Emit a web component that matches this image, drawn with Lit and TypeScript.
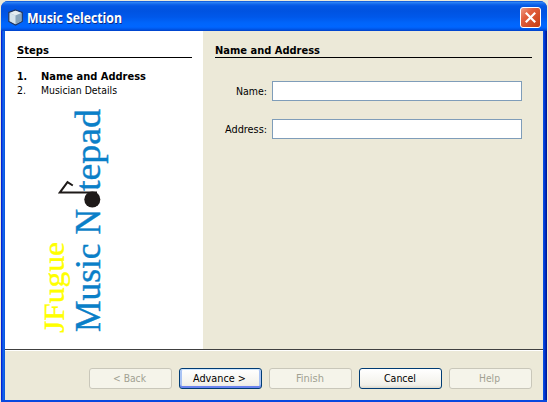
import { LitElement, html, svg, css } from "lit";
import { customElement, property } from "lit/decorators.js";

/* A single line of text fitted to a given width; its baseline is 11px down. */
@customElement("fitted-label")
class FittedLabel extends LitElement {
  @property() text = "";
  @property({ type: Number }) width = 50;

  static styles = css`
    :host { display: block; flex: none; height: 14px; }
    svg { display: block; overflow: visible; }
    text { fill: currentColor; white-space: pre; }
  `;

  render() {
    return html`<svg width=${this.width} height="14">
      <text x="0" y="11" textLength=${this.width} lengthAdjust="spacingAndGlyphs">${this.text}</text>
    </svg>`;
  }
}

@customElement("wizard-logo")
class WizardLogo extends LitElement {
  static styles = css`
    :host { display: block; }
    svg { display: block; }
    text { font-family: "Liberation Serif", serif; }
    .product { font-size: 30px; fill: #ffff00; stroke: #ffff00; stroke-width: 0.4; }
    .title { font-size: 35px; fill: #0a7fc8; stroke: #0a7fc8; stroke-width: 0.4; }
  `;

  render() {
    return html`<svg width="80" height="236" viewBox="35 103 80 236">
      ${svg`
        <text class="product" transform="translate(63.5 333) rotate(-90)" textLength="91" lengthAdjust="spacingAndGlyphs">JFugue</text>
        <text class="title" transform="translate(100 332) rotate(-90)" textLength="123" lengthAdjust="spacingAndGlyphs">Music N</text>
        <text class="title" transform="translate(100 191) rotate(-90)" textLength="82" lengthAdjust="spacingAndGlyphs">tepad</text>
        <circle cx="92.3" cy="199.5" r="8" fill="#1e1a19"/>
        <path d="M97 192.6H59.8L67.5 182.2L72.8 185.5" fill="none" stroke="#1e1a19" stroke-width="2"/>
      `}
    </svg>`;
  }
}

@customElement("app-root")
class AppRoot extends LitElement {
  static styles = css`
    :host {
      display: block; width: 548px; height: 402px; overflow: hidden; box-sizing: border-box;
      padding: 1px 1px 0 1px; background: #ece9d8; color: #000;
      font: 11px "DejaVu Sans Condensed", "DejaVu Sans", sans-serif;
    }
    .window {
      height: 401px; box-sizing: border-box; display: flex; flex-direction: column;
      border-radius: 7px 7px 0 0; overflow: hidden;
      background: linear-gradient(90deg, #0019cf 0, #0831d9 1px, #166aee 2px, #0855dd 4px, #0855dd calc(100% - 4px), #0543e0 calc(100% - 3px), #0030c8 calc(100% - 2px), #00138c 100%);
    }
    .titlebar {
      height: 30px; flex: none; display: flex; align-items: center; box-sizing: border-box;
      padding: 0 6px 0 7px; color: #fff;
      background: linear-gradient(180deg, #0a4fd4 0, #2b83f5 1.5px, #1568ec 3px, #0458e4 5px, #0053e1 10px, #0058ea 16px, #0065fb 22px, #0066ff 26px, #0058ea 28px, #0040c8 30px);
    }
    .titlebar svg { flex: none; }
    .caption {
      font: bold 14px "Open Sans", "Noto Sans", sans-serif; margin: 5px 0 0 3px;
      text-shadow: 1px 1px #0a2a86; flex: 1;
    }
    .caption svg { display: block; overflow: visible; }
    .app-icon { margin-top: 2px; }
    .close { display: block; margin-top: 3px; }
    .content { height: 369px; flex: none; margin: 0 4px; display: flex; flex-direction: column; background: #ece9d8; }
    .panels { height: 318px; flex: none; display: flex; border-bottom: 1px solid #404040; }
    .steps { width: 198px; box-sizing: border-box; padding: 12px 11px 0 12px; background: #fff; }
    .form { flex: 1; padding: 12px 11px 0 12px; }
    .heading { height: 14px; border-bottom: 1px solid #000; }
    .strong { font-weight: bold; }
    .list { padding-top: 11px; }
    .step { display: grid; grid-template-columns: 24px 1fr; height: 14px; }
    wizard-logo { margin: 6px 0 0 18px; }
    .row { display: flex; justify-content: flex-end; align-items: flex-start; gap: 5px; margin-right: 10px; height: 20px; }
    .row + .row { margin-top: 18px; }
    .row fitted-label { margin-top: 3px; }
    .first { margin-top: 23px; }
    .field { width: 250px; height: 20px; box-sizing: border-box; border: 1px solid #7f9db9; background: #fff; }
    .actions { display: flex; justify-content: flex-end; gap: 7px; padding: 17px 11px 0 0; border-top: 1px solid #fff; }
    .button {
      width: 83px; height: 21px; box-sizing: border-box; display: flex; justify-content: center;
      padding: 2px 2px 0 0; border: 1px solid #003c74; border-radius: 3px;
      background: linear-gradient(#fff, #f6f5f0 60%, #f0efe8 85%, #dcd8cc);
    }
    .primary { box-shadow: inset 0 1px #cee7ff, inset 0 -2px #6982ee, inset 2px 0 #a9c3f4, inset -2px 0 #a9c3f4; }
    .disabled { color: #a1a192; border-color: #c9c7ba; background: #f5f4ea; }
    .edge { height: 2px; background: #0848df; }
  `;

  private button(text: string, width: number, kind = "") {
    return html`<div class="button ${kind}"><fitted-label text=${text} width=${width}></fitted-label></div>`;
  }

  render() {
    return html`
      <div class="window">
        <div class="titlebar">
          <svg class="app-icon" width="16" height="17" viewBox="0 0 16 17">
            <path d="M7.5 1L14.2 3.5V12.5L7.5 16L.8 12.5V3.5Z" fill="#a9c0d4" stroke="#23375f" stroke-width="1.2"/>
            <path d="M7.5 1.8L13.2 4L7.5 6.5L1.8 4Z" fill="#e5edf0"/>
            <path d="M1.8 4.2L7.3 6.6V15L1.8 12Z" fill="#d5e4ec"/>
            <path d="M7.8 6.6L13.3 4.2V12L7.8 15Z" fill="#89a5ba"/>
          </svg>
          <div class="caption"><svg width="95" height="17"><text x="0" y="13" fill="#fff" textLength="95" lengthAdjust="spacingAndGlyphs">Music Selection</text></svg></div>
          <svg class="close" width="21" height="21" viewBox="0 0 21 21">
            <defs><linearGradient id="red" x1="0" y1="0" x2="1" y2="1">
              <stop offset="0" stop-color="#f0a08a"/><stop offset=".35" stop-color="#e2603e"/><stop offset="1" stop-color="#c43a10"/>
            </linearGradient></defs>
            <rect x=".5" y=".5" width="20" height="20" rx="2.5" fill="url(#red)" stroke="#fff"/>
            <path d="M5.8 5.8L15.2 15.2M15.2 5.8L5.8 15.2" stroke="#fff" stroke-width="2.2"/>
          </svg>
        </div>
        <div class="content">
          <div class="panels">
            <div class="steps">
              <div class="heading strong"><fitted-label text="Steps" width="32"></fitted-label></div>
              <div class="list">
                <div class="step strong"><fitted-label text="1." width="10"></fitted-label><fitted-label text="Name and Address" width="105"></fitted-label></div>
                <div class="step"><fitted-label text="2." width="9"></fitted-label><fitted-label text="Musician Details" width="76"></fitted-label></div>
              </div>
              <wizard-logo></wizard-logo>
            </div>
            <div class="form">
              <div class="heading strong"><fitted-label text="Name and Address" width="105"></fitted-label></div>
              <div class="row first"><fitted-label text="Name:" width="31"></fitted-label><div class="field"></div></div>
              <div class="row"><fitted-label text="Address:" width="42"></fitted-label><div class="field"></div></div>
            </div>
          </div>
          <div class="actions">
            ${this.button("< Back", 33, "disabled")}
            ${this.button("Advance >", 53, "primary")}
            ${this.button("Finish", 28, "disabled")}
            ${this.button("Cancel", 32)}
            ${this.button("Help", 21, "disabled")}
          </div>
        </div>
        <div class="edge"></div>
      </div>
    `;
  }
}
